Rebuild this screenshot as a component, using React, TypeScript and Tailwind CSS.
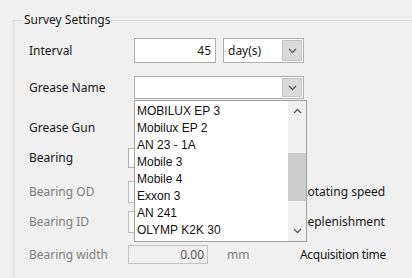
import React from "react";

const Chevron = ({ up = false }: { up?: boolean }) => (
  <svg width="9" height="6" viewBox="0 0 9 6" className="block">
    <polyline
      points={up ? "1,5 4.5,1.5 8,5" : "1,1 4.5,4.5 8,1"}
      fill="none"
      stroke="#5a5a5a"
      strokeWidth="1.3"
    />
  </svg>
);

const DropButton = () => (
  <div className="flex h-full w-[20px] shrink-0 items-center justify-center border border-[#c2c2c2] bg-[#dadada]">
    <Chevron />
  </div>
);

const items = [
  "MOBILUX EP 3",
  "Mobilux EP 2",
  "AN 23 - 1A",
  "Mobile 3",
  "Mobile 4",
  "Exxon 3",
  "AN 241",
  "OLYMP K2K 30",
];

export default function App() {
  return (
    <div className="relative h-[278px] w-[412px] overflow-hidden bg-[#f0f0f0] pl-[13px] pt-[20px] font-['Noto_Sans',sans-serif] text-[12px] leading-none text-[#161616]">
      <div className="relative h-[300px] border-l border-t border-[#dcdcdc] pl-[15px]">
        <span className="absolute left-[9px] top-[-9px] bg-[#f0f0f0] px-[1px] leading-[16px]">
          Survey Settings
        </span>
        <div className="flex flex-col">
          {/* Interval */}
          <div className="mt-[17px] flex h-[25px] items-center">
            <span className="w-[105px] shrink-0">Interval</span>
            <div className="flex h-full w-[82px] shrink-0 items-center justify-end border border-[#adadad] bg-white pr-[4px]">
              45
            </div>
            <div className="ml-[7px] flex h-full w-[81px] shrink-0 items-center border border-[#adadad] bg-white p-[1px]">
              <span className="flex-1 pl-[3px]">day(s)</span>
              <DropButton />
            </div>
          </div>
          {/* Grease Name */}
          <div className="mt-[13px] flex h-[23px] items-center">
            <span className="w-[105px] shrink-0">Grease Name</span>
            <div className="flex h-full w-[170px] shrink-0 items-center justify-end border border-[#adadad] bg-white p-[1px]">
              <DropButton />
            </div>
          </div>
          {/* Grease Gun */}
          <div className="mt-[17px] flex h-[23px] items-center">
            <span className="w-[105px] shrink-0">Grease Gun</span>
            <div className="flex h-full w-[170px] shrink-0 items-center justify-end border border-[#adadad] bg-white p-[1px]">
              <DropButton />
            </div>
          </div>
          {/* Bearing */}
          <div className="mt-[9px] flex h-[20px] items-center">
            <span className="w-[99px] shrink-0">Bearing</span>
            <div className="h-full w-[176px] shrink-0 border border-[#adadad] bg-white" />
          </div>
          {/* Bearing OD */}
          <div className="mt-[13px] flex h-[22px] items-center whitespace-nowrap text-[#7d7d7d]">
            <span className="w-[99px] shrink-0">Bearing OD</span>
            <div className="h-full w-[80px] shrink-0 border border-[#bdbdbd] bg-[#f7f7f7]" />
            <span className="w-[92px] shrink-0 pl-[19px]">mm</span>
            <span className="shrink-0 text-[#161616]">Rotating speed</span>
          </div>
          {/* Bearing ID */}
          <div className="mt-[8px] flex h-[22px] items-center whitespace-nowrap text-[#7d7d7d]">
            <span className="w-[99px] shrink-0">Bearing ID</span>
            <div className="h-full w-[80px] shrink-0 border border-[#bdbdbd] bg-[#f7f7f7]" />
            <span className="w-[92px] shrink-0 pl-[19px]">mm</span>
            <span className="shrink-0 text-[#161616]">Replenishment</span>
          </div>
          {/* Bearing width */}
          <div className="mt-[12px] flex h-[19px] items-center whitespace-nowrap text-[#7d7d7d]">
            <span className="w-[99px] shrink-0">Bearing width</span>
            <div className="flex h-full w-[80px] shrink-0 items-center justify-end border border-[#c4c4c4] bg-[#f0f0f0] pr-[3px] text-[#555]">
              0.00
            </div>
            <span className="w-[92px] shrink-0 pl-[19px]">mm</span>
            <span className="shrink-0 tracking-[-0.3px] text-[#161616]">Acquisition time</span>
          </div>
        </div>
      </div>

      {/* open dropdown list */}
      <div className="absolute left-[134px] top-[100px] flex h-[142px] w-[173px] border border-[#a0a0a0] bg-white font-['Liberation_Sans',sans-serif] text-[12px] text-[#111]">
        <div className="flex flex-1 flex-col pt-[1px]">
          {items.map((t) => (
            <div key={t} className="flex h-[17px] items-center whitespace-nowrap pl-[2px]">
              {t}
            </div>
          ))}
        </div>
        <div className="flex w-[18px] flex-col bg-[#f0f0f0]">
          <div className="flex h-[20px] items-center justify-center">
            <Chevron up />
          </div>
          <div className="flex-1 pt-[32px]">
            <div className="h-[48px] bg-[#cdcdcd]" />
          </div>
          <div className="flex h-[20px] items-center justify-center">
            <Chevron />
          </div>
        </div>
      </div>
    </div>
  );
}
